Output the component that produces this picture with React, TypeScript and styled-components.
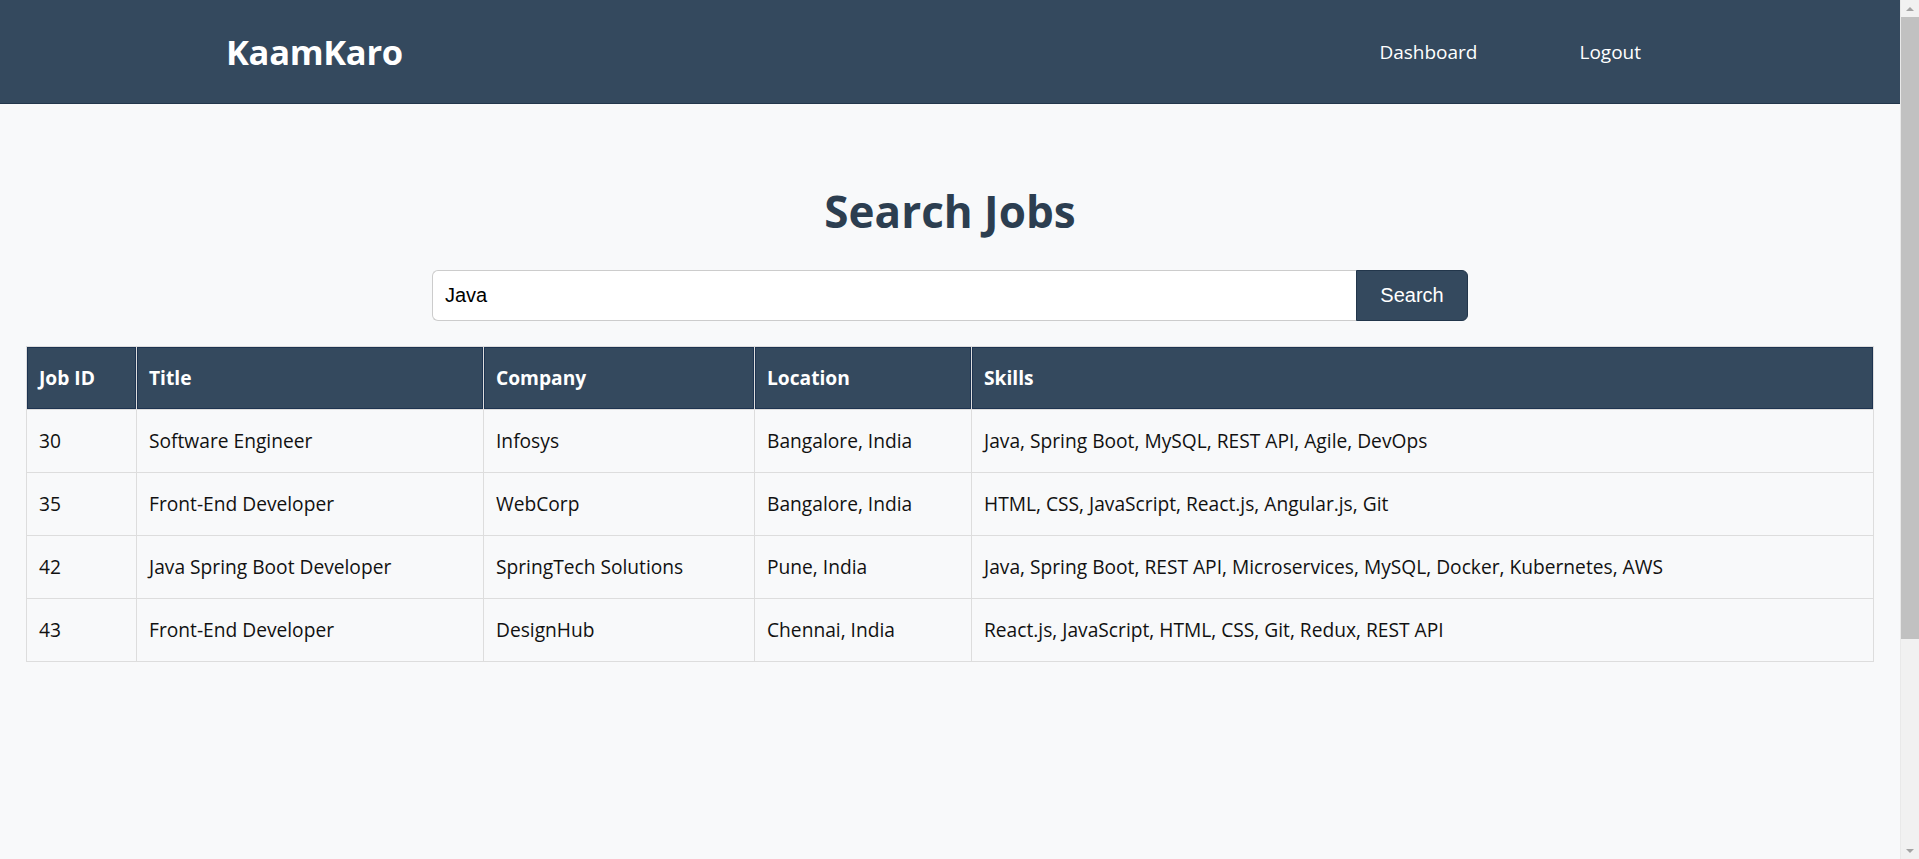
import React from "react";
import styled, { createGlobalStyle } from "styled-components";

const GlobalStyle = createGlobalStyle`
  html {
    background: #f8f9fa;
  }
  body {
    margin: 0 18px 0 0;
    background: #f8f9fa;
    font-family: "Open Sans", "Noto Sans", sans-serif;
    color: #111;
  }
  * { box-sizing: border-box; }
`;

/* Browser scrollbar, drawn over the right edge as in the screenshot */
const ScrollRail = styled.div`
  position: fixed;
  top: 0;
  right: 0;
  width: 19px;
  height: 100vh;
  background: #f1f1f1;
  border-left: 1px solid #e9e9e9;
  display: flex;
  flex-direction: column;
`;

const ScrollArrow = styled.div<{ $down?: boolean }>`
  height: 17px;
  display: flex;
  align-items: center;
  justify-content: center;
  &::before {
    content: "";
    width: 0;
    height: 0;
    border-left: 4px solid transparent;
    border-right: 4px solid transparent;
    ${(p) =>
      p.$down
        ? "border-top: 4px solid #a3a3a3;"
        : "border-bottom: 4px solid #a3a3a3;"}
  }
`;

const ScrollTrack = styled.div`
  flex: 1;
`;

const ScrollThumb = styled.div`
  height: 622px;
  background: #c1c1c1;
`;

const Navbar = styled.header`
  height: 104px;
  background: #34495e;
  border-bottom: 1px solid #22364b;
  display: flex;
  align-items: center;
  justify-content: space-between;
  padding: 0 260px 0 226px;
`;

const Logo = styled.div`
  font-family: "Open Sans", sans-serif;
  font-weight: 700;
  font-size: 34.5px;
  color: #ffffff;
  letter-spacing: -0.3px;
`;

const NavLinks = styled.nav`
  display: flex;
  gap: 102px;
`;

const NavLink = styled.a`
  font-size: 19px;
  color: #ffffff;
  text-decoration: none;
  cursor: pointer;
`;

const Main = styled.main`
  padding: 0 27px 0 26px;
  display: flex;
  flex-direction: column;
  align-items: center;
`;

const Title = styled.h1`
  margin: 77px 0 0;
  font-size: 44px;
  line-height: 60px;
  font-weight: 700;
  color: #2c3e50;
`;

const SearchForm = styled.form`
  display: flex;
  width: 1036px;
  margin-top: 29px;
`;

const SearchInput = styled.input`
  flex: 1;
  height: 51px;
  padding: 0 12px;
  font-family: "Liberation Sans", Arial, sans-serif;
  font-size: 20px;
  color: #000;
  background: #fff;
  border: 1px solid #cccccc;
  border-right: none;
  border-radius: 6px 0 0 6px;
  outline: none;
`;

const SearchButton = styled.button`
  width: 112px;
  height: 51px;
  font-family: "Liberation Sans", Arial, sans-serif;
  font-size: 20px;
  color: #ffffff;
  background: #34495e;
  border: 1px solid #22364b;
  border-radius: 0 6px 6px 0;
  cursor: pointer;
`;

const Table = styled.table`
  width: 100%;
  margin-top: 25px;
  border-collapse: collapse;
  table-layout: fixed;
  font-size: 19.2px;
`;

const Th = styled.th<{ $w?: number }>`
  ${(p) => (p.$w ? `width: ${p.$w}px;` : "")}
  background: #34495e;
  color: #ffffff;
  font-weight: 700;
  text-align: left;
  padding: 18px 12px;
  line-height: 26px;
  border: 1px solid #dddddd;
  box-shadow: inset 0 0 0 1px #1d3350;
`;

const Td = styled.td`
  padding: 18px 12px;
  line-height: 26px;
  border: 1px solid #dddddd;
  color: #111;
  white-space: nowrap;
`;

const jobs = [
  { id: 30, title: "Software Engineer", company: "Infosys", location: "Bangalore, India", skills: "Java, Spring Boot, MySQL, REST API, Agile, DevOps" },
  { id: 35, title: "Front-End Developer", company: "WebCorp", location: "Bangalore, India", skills: "HTML, CSS, JavaScript, React.js, Angular.js, Git" },
  { id: 42, title: "Java Spring Boot Developer", company: "SpringTech Solutions", location: "Pune, India", skills: "Java, Spring Boot, REST API, Microservices, MySQL, Docker, Kubernetes, AWS" },
  { id: 43, title: "Front-End Developer", company: "DesignHub", location: "Chennai, India", skills: "React.js, JavaScript, HTML, CSS, Git, Redux, REST API" },
];

export default function App() {
  return (
    <>
      <GlobalStyle />
      <Navbar>
        <Logo>KaamKaro</Logo>
        <NavLinks>
          <NavLink>Dashboard</NavLink>
          <NavLink>Logout</NavLink>
        </NavLinks>
      </Navbar>
      <Main>
        <Title>Search Jobs</Title>
        <SearchForm onSubmit={(e) => e.preventDefault()}>
          <SearchInput defaultValue="Java" />
          <SearchButton type="submit">Search</SearchButton>
        </SearchForm>
        <Table>
          <thead>
            <tr>
              <Th $w={110}>Job ID</Th>
              <Th $w={347}>Title</Th>
              <Th $w={271}>Company</Th>
              <Th $w={217}>Location</Th>
              <Th>Skills</Th>
            </tr>
          </thead>
          <tbody>
            {jobs.map((j) => (
              <tr key={j.id}>
                <Td>{j.id}</Td>
                <Td>{j.title}</Td>
                <Td>{j.company}</Td>
                <Td>{j.location}</Td>
                <Td>{j.skills}</Td>
              </tr>
            ))}
          </tbody>
        </Table>
      </Main>
      <ScrollRail aria-hidden>
        <ScrollArrow />
        <ScrollTrack>
          <ScrollThumb />
        </ScrollTrack>
        <ScrollArrow $down />
      </ScrollRail>
    </>
  );
}
